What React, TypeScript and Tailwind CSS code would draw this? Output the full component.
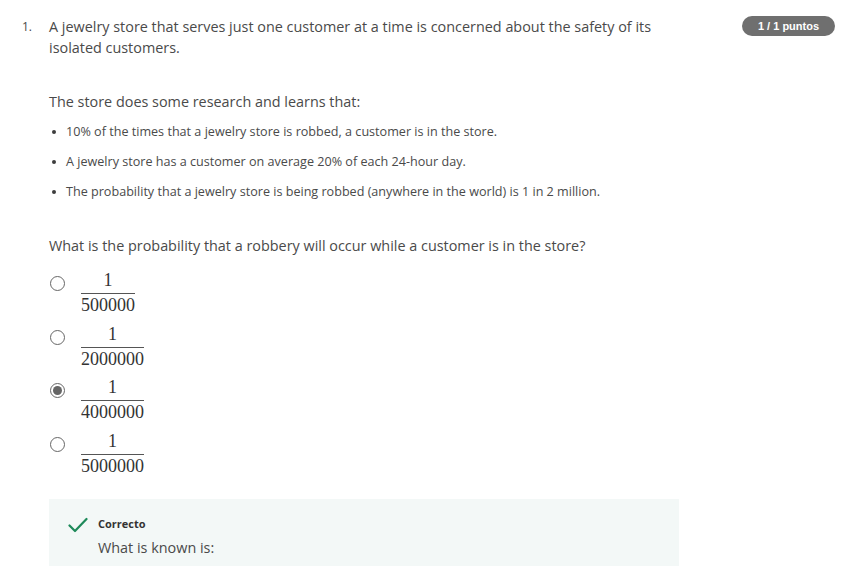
import React from 'react';

const bullets = [
  '10% of the times that a jewelry store is robbed, a customer is in the store.',
  'A jewelry store has a customer on average 20% of each 24-hour day.',
  'The probability that a jewelry store is being robbed (anywhere in the world) is 1 in 2 million.',
];

const options = [
  { den: '500000', checked: false },
  { den: '2000000', checked: false },
  { den: '4000000', checked: true },
  { den: '5000000', checked: false },
];

const Radio = ({ checked }: { checked: boolean }) => (
  <span className="w-[15px] h-[15px] rounded-full border-[1.5px] border-[#666] flex items-center justify-center shrink-0">
    {checked && <span className="w-[9px] h-[9px] rounded-full bg-[#666]" />}
  </span>
);

export default function App() {
  return (
    <div className="w-[865px] h-[566px] overflow-hidden bg-white text-[#4a4a4a] font-['Open_Sans',sans-serif]">
      <div className="flex pt-[16px] pl-[22px] pr-[30px]">
        <div className="w-[27px] text-[12px] leading-[21px]">1.</div>
        <div className="flex-1">
          <div className="flex items-start">
            <p className="w-[640px] text-[14.4px] leading-[21px]">
              A jewelry store that serves just one customer at a time is concerned about the safety of its isolated customers.
            </p>
            <span className="ml-auto h-[20px] w-[93px] rounded-full bg-[#6f6f6f] text-white text-[11px] font-bold font-['Liberation_Sans',Arial,sans-serif] flex items-center justify-center">
              1 / 1 puntos
            </span>
          </div>

          <p className="mt-[33px] text-[14.4px] leading-[21px]">The store does some research and learns that:</p>

          <ul className="mt-[11px] flex flex-col gap-[12px]">
            {bullets.map((b) => (
              <li key={b} className="flex items-center text-[12.6px] leading-[18px]">
                <span className="w-[4px] h-[4px] rounded-full bg-[#3d3d3d] ml-[3px] mr-[10px]" />
                {b}
              </li>
            ))}
          </ul>

          <p className="mt-[34px] text-[14.4px] leading-[21px]">
            What is the probability that a robbery will occur while a customer is in the store?
          </p>

          <div className="mt-[16px] flex flex-col gap-[12.5px]">
            {options.map((o) => (
              <div key={o.den} className="flex items-start">
                <div className="pt-[4px] pl-[1px]">
                  <Radio checked={o.checked} />
                </div>
                <div className="ml-[15px] inline-flex flex-col items-center font-['Liberation_Serif','Times_New_Roman',serif] text-[18px] text-[#333] leading-[16px] px-[1px]">
                  <span className="pb-[5px]">1</span>
                  <span className="self-stretch h-[1px] bg-[#555]" />
                  <span className="pt-[3px]">{o.den}</span>
                </div>
              </div>
            ))}
          </div>

          <div className="mt-[25px] w-[630px] bg-[#f3f8f7] pt-[17px] pb-[20px] pl-[19px] flex items-start">
            <svg width="20" height="16" viewBox="0 0 20 16" className="mt-[1px] shrink-0">
              <path d="M1.5 8.5 L7 14 L18.5 2" fill="none" stroke="#1e8a5a" strokeWidth="2.2" strokeLinecap="round" strokeLinejoin="round" />
            </svg>
            <div className="ml-[10px]">
              <div className="text-[11px] font-bold leading-[16px] text-[#333]">Correcto</div>
              <div className="mt-[5px] text-[14.4px] leading-[21px]">What is known is:</div>
            </div>
          </div>
        </div>
      </div>
    </div>
  );
}
